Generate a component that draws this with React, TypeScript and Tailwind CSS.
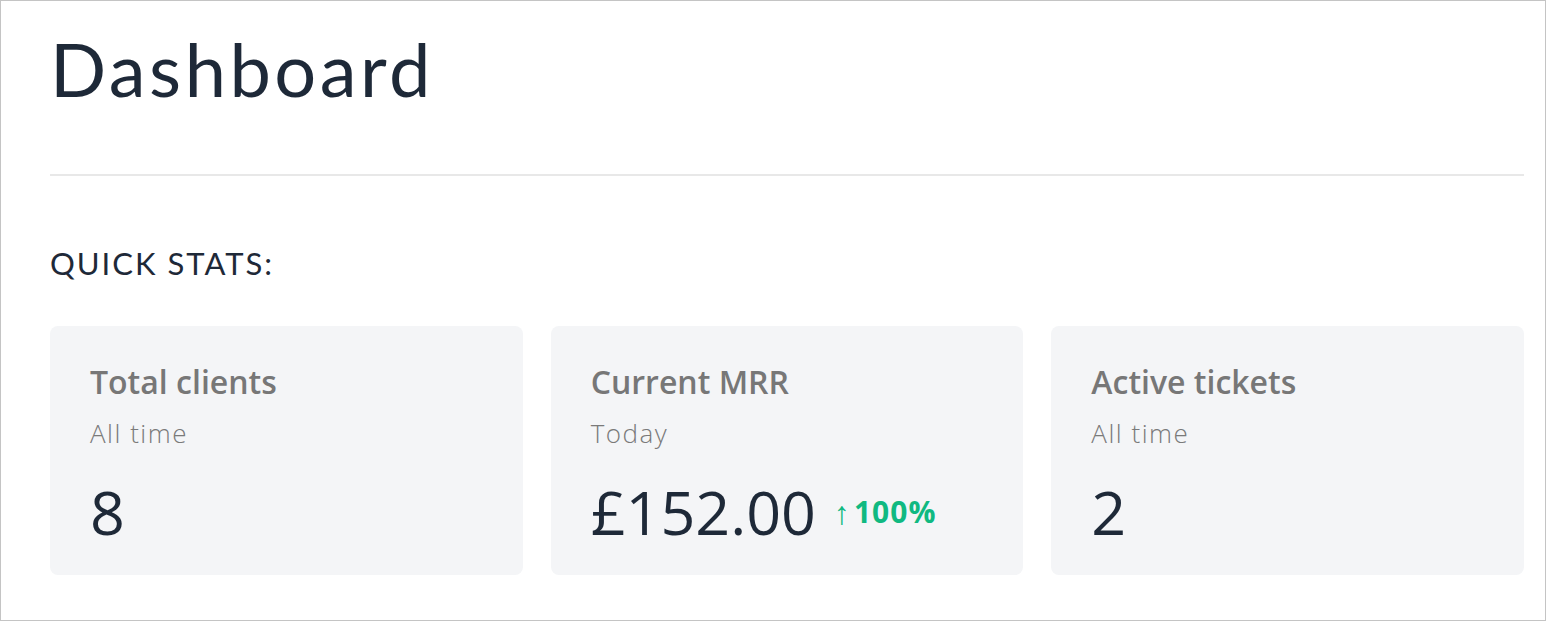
import { ReactNode } from 'react'

type Stat = {
  label: string
  period: string
  value: string
  change?: string
}

const stats: Stat[] = [
  { label: 'Total clients', period: 'All time', value: '8' },
  { label: 'Current MRR', period: 'Today', value: '£152.00', change: '100%' },
  { label: 'Active tickets', period: 'All time', value: '2' },
]

function StatCard({ stat }: { stat: Stat }): ReactNode {
  return (
    <div className="h-[249px] rounded-lg bg-[#f4f5f7] px-10 pt-10">
      <p className="text-[32px] font-semibold leading-none text-[#777777]">
        {stat.label}
      </p>
      <p className="mt-[22px] text-[26px] font-light leading-none tracking-[1.5px] text-[#7a7a7a]">
        {stat.period}
      </p>
      <div className="mt-[35px] flex items-center">
        <span className="text-[61px] leading-none text-[#1e2938]">
          {stat.value}
        </span>
        {stat.change ? (
          <span className="ml-[18px] flex items-center leading-none text-[#10b981]">
            <span className="text-[32px] font-light">↑</span>
            <span className="ml-[4px] text-[30px] font-bold tracking-[1px]">
              {stat.change}
            </span>
          </span>
        ) : null}
      </div>
    </div>
  )
}

export default function App() {
  return (
    <div className="h-[621px] border border-[#c4c4c4] bg-white pl-[49px] pr-[21px] font-['Open_Sans',sans-serif]">
      <h1 className="mt-[31px] font-['Lato',sans-serif] text-[74px] font-normal leading-none tracking-[3.5px] text-[#1e2938]">
        Dashboard
      </h1>
      <div className="mt-[68px] border-t-2 border-[#e8e8e8]" />
      <h2 className="mt-[72px] font-['Lato',sans-serif] text-[31px] font-normal leading-none tracking-[2px] text-[#1e2938]">
        QUICK STATS:
      </h2>
      <div className="mt-[47px] grid grid-cols-3 gap-7">
        {stats.map((stat) => (
          <StatCard key={stat.label} stat={stat} />
        ))}
      </div>
    </div>
  )
}
